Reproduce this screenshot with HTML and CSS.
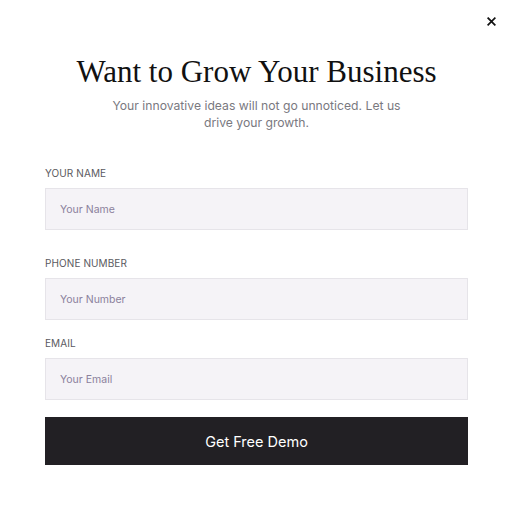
FILE: index.html
```html
<!DOCTYPE html>
<html>
<head>
<meta charset="utf-8">
<link rel="stylesheet" href="styles.css">
</head>
<body>
<div class="modal">
  <button class="close" aria-label="Close">
    <svg width="9" height="9" viewBox="0 0 9 9"><path d="M1.2 1.2L7.8 7.8M7.8 1.2L1.2 7.8" stroke="#111" stroke-width="1.7" stroke-linecap="square"/></svg>
  </button>
  <h1 class="title">Want to Grow Your Business</h1>
  <p class="subtitle">Your innovative ideas will not go unnoticed. Let us<br>drive your growth.</p>
  <form class="form">
    <div class="field field-name">
      <label class="label">YOUR NAME</label>
      <div class="input">Your Name</div>
    </div>
    <div class="field field-phone">
      <label class="label">PHONE NUMBER</label>
      <div class="input">Your Number</div>
    </div>
    <div class="field field-email">
      <label class="label">EMAIL</label>
      <div class="input">Your Email</div>
    </div>
    <div class="button">Get Free Demo</div>
  </form>
</div>
</body>
</html>
```
FILE: styles.css
```css
html, body {
  margin: 0;
  padding: 0;
  background: #fff;
}
.modal {
  position: relative;
  width: 513px;
  height: 512px;
  box-sizing: border-box;
  padding: 55px 45px 0 45px;
  font-family: "Inter", "Liberation Sans", sans-serif;
}
.close {
  position: absolute;
  top: 16px;
  right: 17px;
  width: 10px;
  height: 10px;
  padding: 0;
  border: 0;
  background: none;
  display: flex;
  align-items: center;
  justify-content: center;
}
.title {
  margin: 0;
  font-family: "Liberation Serif", serif;
  font-weight: 400;
  font-size: 31px;
  line-height: 34px;
  color: #111;
  text-align: center;
}
.subtitle {
  margin: 8px 0 0 0;
  font-size: 12.2px;
  line-height: 17px;
  color: #7a797f;
  text-align: center;
}
.form {
  display: flex;
  flex-direction: column;
  margin-top: 36px;
}
.field {
  display: flex;
  flex-direction: column;
}
.field-phone {
  margin-top: 27px;
}
.field-email {
  margin-top: 17px;
}
.label {
  font-size: 10px;
  line-height: 12px;
  color: #5a595e;
  letter-spacing: 0.1px;
  margin-bottom: 9px;
}
.input {
  height: 42px;
  box-sizing: border-box;
  background: #f5f3f7;
  border: 1px solid #e6e4e9;
  padding-left: 14px;
  display: flex;
  align-items: center;
  font-size: 10.5px;
  color: #8b819c;
}
.button {
  margin-top: 17px;
  height: 48px;
  background: #222024;
  color: #fff;
  display: flex;
  align-items: center;
  justify-content: center;
  font-size: 14.5px;
}
```
